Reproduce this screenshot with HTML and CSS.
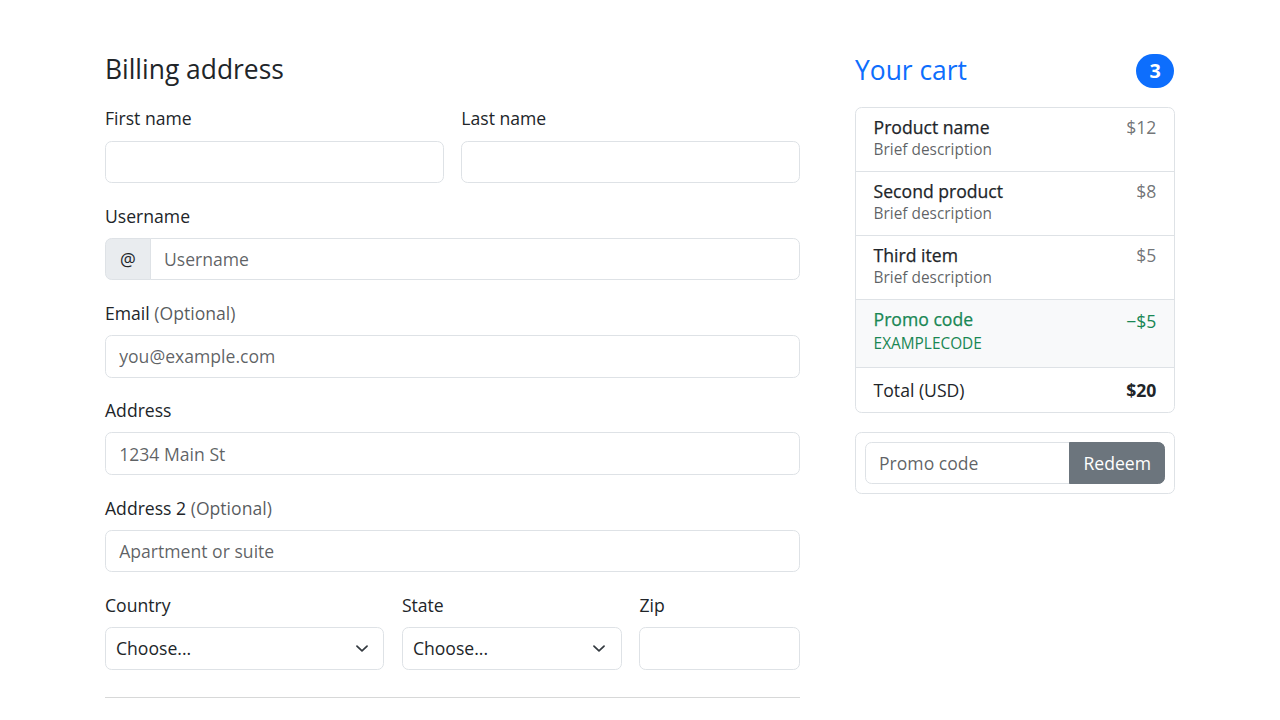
FILE: index.html
```html
<!DOCTYPE html>
<html lang="en">
<head>
<meta charset="utf-8">
<title>Checkout</title>
<link rel="stylesheet" href="styles.css">
</head>
<body>
<main class="page">
  <section class="billing">
    <h4 class="title">Billing address</h4>
    <form class="form-grid">
      <div class="field span-6">
        <label class="label" for="firstName">First name</label>
        <input class="control" type="text" id="firstName">
      </div>
      <div class="field span-6">
        <label class="label" for="lastName">Last name</label>
        <input class="control" type="text" id="lastName">
      </div>
      <div class="field span-12">
        <label class="label" for="username">Username</label>
        <div class="input-group">
          <span class="addon">@</span>
          <input class="control control-join" type="text" id="username" placeholder="Username">
        </div>
      </div>
      <div class="field span-12">
        <label class="label" for="email">Email <span class="muted">(Optional)</span></label>
        <input class="control" type="email" id="email" placeholder="you@example.com">
      </div>
      <div class="field span-12">
        <label class="label" for="address">Address</label>
        <input class="control" type="text" id="address" placeholder="1234 Main St">
      </div>
      <div class="field span-12">
        <label class="label" for="address2">Address 2 <span class="muted">(Optional)</span></label>
        <input class="control" type="text" id="address2" placeholder="Apartment or suite">
      </div>
      <div class="field span-5">
        <label class="label" for="country">Country</label>
        <select class="control select" id="country"><option>Choose...</option></select>
      </div>
      <div class="field span-4">
        <label class="label" for="state">State</label>
        <select class="control select" id="state"><option>Choose...</option></select>
      </div>
      <div class="field span-3">
        <label class="label" for="zip">Zip</label>
        <input class="control" type="text" id="zip">
      </div>
    </form>
    <hr class="divider">
  </section>

  <aside class="cart">
    <h4 class="cart-head">
      <span>Your cart</span>
      <span class="badge">3</span>
    </h4>
    <ul class="list">
      <li class="item item-sm">
        <div>
          <h6 class="name">Product name</h6>
          <small class="desc">Brief description</small>
        </div>
        <span class="price">$12</span>
      </li>
      <li class="item item-sm">
        <div>
          <h6 class="name">Second product</h6>
          <small class="desc">Brief description</small>
        </div>
        <span class="price">$8</span>
      </li>
      <li class="item item-sm">
        <div>
          <h6 class="name">Third item</h6>
          <small class="desc">Brief description</small>
        </div>
        <span class="price">$5</span>
      </li>
      <li class="item item-promo">
        <div>
          <h6 class="name">Promo code</h6>
          <small class="desc">EXAMPLECODE</small>
        </div>
        <span class="price">−$5</span>
      </li>
      <li class="item item-total">
        <span>Total (USD)</span>
        <strong>$20</strong>
      </li>
    </ul>
    <form class="promo">
      <input class="control promo-input" type="text" placeholder="Promo code">
      <button class="btn" type="button">Redeem</button>
    </form>
  </aside>
</main>
</body>
</html>
```
FILE: styles.css
```css
* { box-sizing: border-box; }

html, body { margin: 0; }

body {
  font-family: "Open Sans", "Noto Sans", sans-serif;
  font-size: 17.6px;
  line-height: 1.5;
  color: #212529;
  background: #fff;
}

.page {
  display: flex;
  justify-content: center;
  gap: 55px;
  padding-top: 54px;
}

.billing { width: 695px; }
.cart { width: 320px; }

.title {
  margin: 0 0 19.7px;
  font-size: 26.4px;
  font-weight: 500;
  line-height: 1.2;
}

.form-grid {
  display: grid;
  grid-template-columns: repeat(12, minmax(0, 1fr));
  column-gap: 17.6px;
  row-gap: 19.5px;
}

.span-12 { grid-column: span 12; }
.span-6 { grid-column: span 6; }
.span-5 { grid-column: span 5; }
.span-4 { grid-column: span 4; }
.span-3 { grid-column: span 3; }

.label {
  display: block;
  margin-bottom: 8.8px;
  line-height: 26.4px;
}

.muted { color: rgba(33, 37, 41, 0.75); }

.control {
  display: block;
  width: 100%;
  height: 42.6px;
  margin: 0;
  padding: 0 13.2px;
  font: inherit;
  color: #212529;
  background: #fff;
  border: 1px solid #dee2e6;
  border-radius: 6.6px;
  outline: none;
}

.control::placeholder { color: rgba(33, 37, 41, 0.72); opacity: 1; }

.select {
  appearance: none;
  -webkit-appearance: none;
  padding-right: 39.6px;
  padding-left: 10px;
  background-image: url("data:image/svg+xml,%3csvg xmlns='http://www.w3.org/2000/svg' viewBox='0 0 16 16'%3e%3cpath fill='none' stroke='%23343a40' stroke-linecap='round' stroke-linejoin='round' stroke-width='2' d='m2 5 6 6 6-6'/%3e%3c/svg%3e");
  background-repeat: no-repeat;
  background-position: right 13.2px center;
  background-size: 17.6px 13.2px;
}

.input-group { display: flex; }

.addon {
  display: flex;
  align-items: center;
  padding: 0 14px;
  background: #e9ecef;
  border: 1px solid #dee2e6;
  border-radius: 6.6px 0 0 6.6px;
  white-space: nowrap;
}

.control-join {
  flex: 1;
  width: auto;
  margin-left: -1px;
  border-radius: 0 6.6px 6.6px 0;
}

.divider {
  margin: 27.5px 0 0;
  border: 0;
  border-top: 1px solid rgba(33, 37, 41, 0.18);
}

.cart-head {
  display: flex;
  justify-content: space-between;
  align-items: center;
  margin: 0 0 19.5px;
  font-size: 26.4px;
  font-weight: 500;
  line-height: 1.2;
  color: #0d6efd;
}

.badge {
  background: #0d6efd;
  color: #fff;
  font-size: 19.8px;
  font-weight: 700;
  line-height: 1;
  padding: 6.9px 13.2px;
  margin-right: 1px;
  border-radius: 50rem;
}

.list {
  list-style: none;
  margin: 0 0 19px;
  padding: 0;
  border: 1px solid #dee2e6;
  border-radius: 6.6px;
  overflow: hidden;
}

.item {
  display: flex;
  justify-content: space-between;
  padding: 8.8px 17.6px;
  border-top: 1px solid #dee2e6;
}

.item:first-child { border-top: 0; }

.name {
  margin: 0;
  font-size: 17.6px;
  font-weight: 500;
  line-height: 21.1px;
  -webkit-text-stroke: 0.25px currentColor;
}

.desc {
  display: block;
  font-size: 15.4px;
  line-height: 24.3px;
  color: rgba(33, 37, 41, 0.72);
}

.price { color: rgba(33, 37, 41, 0.65); line-height: 25px; }

.item-sm .price { line-height: 21px; }

.item-promo {
  background: #f8f9fa;
  color: #198754;
}

.item-promo .desc { color: #198754; line-height: 28px; }
.item-promo .price { color: #198754; }

.item-total { line-height: 26.4px; }

.promo {
  display: flex;
  margin: 0;
  padding: 8.8px;
  border: 1px solid #dee2e6;
  border-radius: 6.6px;
}

.promo-input {
  flex: 1;
  width: auto;
  min-width: 0;
  border-radius: 6.6px 0 0 6.6px;
}

.btn {
  height: 42.6px;
  padding: 0 13.2px;
  font: inherit;
  color: #fff;
  background: #6c757d;
  border: 1px solid #6c757d;
  border-radius: 0 6.6px 6.6px 0;
  margin-left: -1px;
}
```
